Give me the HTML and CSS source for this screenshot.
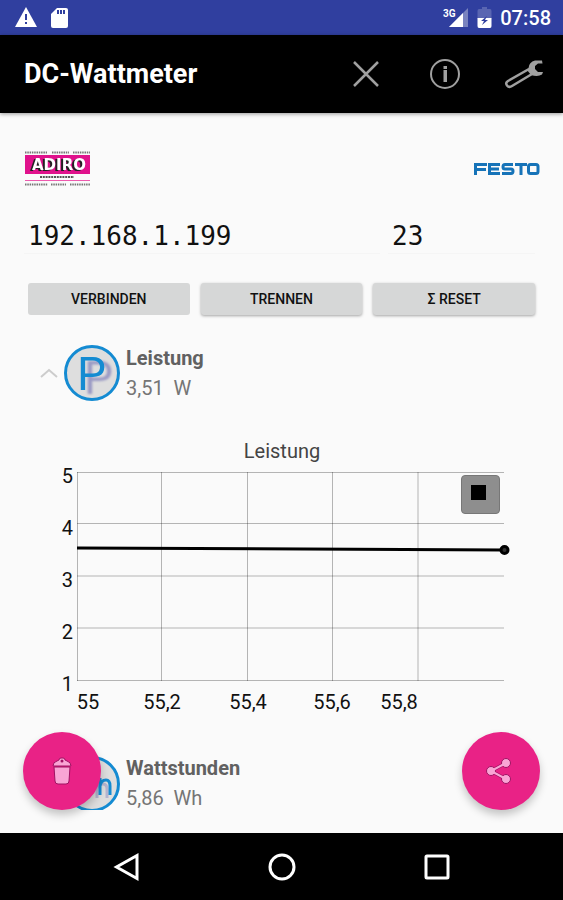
FILE: index.html
```html
<!DOCTYPE html>
<html lang="de">
<head>
<meta charset="utf-8">
<meta name="viewport" content="width=device-width, initial-scale=1">
<title>DC-Wattmeter</title>
<link rel="stylesheet" href="styles.css">
</head>
<body>
<div class="status-bar">
  <div class="status-group status-left">
    <svg width="22" height="21" viewBox="0 0 22 21" aria-hidden="true">
      <path d="M11 0 L22 20 H0 Z" fill="#fff"/>
      <path d="M10 7h2v6h-2zM10 15h2v2h-2z" fill="#303f9f"/>
    </svg>
    <svg width="17" height="20" viewBox="0 0 17 20" aria-hidden="true">
      <path d="M6 0H15Q17 0 17 2V18Q17 20 15 20H2Q0 20 0 18V6Z" fill="#fff"/>
      <path d="M6 2h2v4h-2zM9 2h2v4h-2zM12 2h2v4h-2z" fill="#303f9f"/>
    </svg>
  </div>
  <div class="status-group status-right">
    <svg width="26" height="21" viewBox="0 0 26 21" aria-hidden="true">
      <path d="M25 1V20H6Z" fill="#7983bf"/>
      <path d="M20 6V20H6Z" fill="#fff"/>
      <text class="network" x="0" y="10">3G</text>
    </svg>
    <svg width="15" height="21" viewBox="0 0 15 21" aria-hidden="true">
      <path d="M5 0H10V2H13Q14.500 2 14.500 4V12H.5V4Q.5 2 2 2H5Z" fill="#5965b2"/>
      <path d="M.5 11H14.500V19Q14.500 21 13 21H2Q.5 21 .5 19Z" fill="#fff"/>
      <path d="M10 9 4 14H7L5 18 11 13H8Z" fill="#303f9f"/>
    </svg>
    <time class="clock">07:58</time>
  </div>
</div>

<header class="app-bar">
  <h1 class="app-title">DC-Wattmeter</h1>
  <div class="actions">
    <button class="action" type="button" aria-label="Schließen">
      <svg width="40" height="40" viewBox="0 0 40 40"><path d="M8 8 32 32M32 8 8 32" stroke="#a0a0a0" stroke-width="2.500" fill="none"/></svg>
    </button>
    <button class="action" type="button" aria-label="Info">
      <svg width="40" height="40" viewBox="0 0 40 40"><circle cx="20" cy="20" r="14" stroke="#a0a0a0" stroke-width="2" fill="none"/><path d="M18.500 16h3.500v12h-3.500zM18.500 12h3.500v3h-3.500z" fill="#a0a0a0"/></svg>
    </button>
    <button class="action" type="button" aria-label="Einstellungen">
      <svg width="40" height="40" viewBox="0 0 40 40"><path d="M25 15 4 27Q1 29 3 31.500Q5 34 8 32L28 20" stroke="#a0a0a0" stroke-width="2.500" fill="none"/><path d="M38 6.500H31Q25 8 24.500 14L23 16 27 21Q34 23 38 20.500L39 18H34L31 15V12L34 9.500H38.500Z" fill="#a0a0a0"/></svg>
    </button>
  </div>
</header>

<main class="main">
  <div class="logos">
    <svg width="67" height="36" viewBox="0 0 67 36" role="img" aria-label="ADIRO">
      <path d="M1 1.500H23M28 1.500H45M49 1.500H66" stroke="#777" stroke-width="2" stroke-dasharray="1.500 .8"/>
      <rect x="1" y="4" width="65" height="19" fill="#e0128c"/>
      <text class="adiro" x="35" y="19">ADIRO</text>
      <path d="M16 26H50" stroke="#555" stroke-width="2" stroke-dasharray="2 .8"/>
      <path d="M1 29.500H66" stroke="#ee5aae"/>
      <path d="M1 33.500H24M27 33.500H42M46 33.500H66" stroke="#777" stroke-width="2" stroke-dasharray="1.500 .8"/>
    </svg>
    <svg class="festo" width="66" height="14" viewBox="-1 0 66 14" role="img" aria-label="FESTO">
      <g fill="none" stroke="#1673b8" stroke-width="3">
        <path d="M1.500 13V2.500H13M2 7.500H12"/>
        <path d="M26 2.500H15.500V11.500H26M15 7H25"/>
        <path d="M39 2.500H31Q29 2.500 29 5Q29 7 31 7H37Q39 7 39 9Q39 11.500 37 11.500H28"/>
        <path d="M41 2.500H53M47 2V13"/>
        <path d="M56.500 2.500H62Q64 2.500 64 4.500V9.500Q64 11.500 62 11.500H56.500Q54.500 11.500 54.500 9.500V4.500Q54.500 2.500 56.500 2.500Z"/>
      </g>
    </svg>
  </div>

  <form class="connection">
    <div class="fields">
      <input class="field" type="text" value="192.168.1.199" aria-label="IP-Adresse">
      <input class="field" type="text" value="23" aria-label="Port">
    </div>
    <div class="buttons">
      <button class="btn btn-flat" type="button">VERBINDEN</button>
      <button class="btn" type="button">TRENNEN</button>
      <button class="btn" type="button">Σ RESET</button>
    </div>
  </form>

  <section class="measure">
    <button class="chevron" type="button" aria-label="Einklappen" aria-expanded="true">
      <svg width="18" height="10" viewBox="0 0 18 10"><path d="M1 9 9 2 17 9" stroke="#ccc" stroke-width="2" fill="none"/></svg>
    </button>
    <svg width="56" height="56" viewBox="0 0 56 56" aria-hidden="true">
      <circle cx="28" cy="28" r="26.500" fill="#dedede" stroke="#148bd2" stroke-width="3"/>
      <text class="letter" x="13" y="45">P</text>
    </svg>
    <div class="reading">
      <h2 class="name">Leistung</h2>
      <p class="value">3,51&nbsp; W</p>
    </div>
  </section>

  <figure class="chart">
    <svg class="plot" viewBox="0 0 515 300" role="img" aria-label="Leistung">
      <g stroke="#000" stroke-opacity=".28" fill="none">
        <path d="M53 40.500H480M53 91.500H480M53 144H480M53 196H480M53 248.500H480"/>
        <path d="M53.500 40V249M137.500 40V249M223.500 40V249M308.500 40V249M394 40V249"/>
      </g>
      <path d="M53 116 480 118" stroke="#000" stroke-width="3"/>
      <circle cx="480.500" cy="118" r="3.500" fill="#333" stroke="#000" stroke-width="3"/>
      <text class="label label-title" x="258" y="26">Leistung</text>
      <g class="label label-y">
        <text x="49" y="51">5</text>
        <text x="49" y="103">4</text>
        <text x="49" y="155">3</text>
        <text x="49" y="207">2</text>
        <text x="49" y="259">1</text>
      </g>
      <g class="label">
        <text x="64" y="277">55</text>
        <text x="138" y="277">55,2</text>
        <text x="224" y="277">55,4</text>
        <text x="308" y="277">55,6</text>
        <text x="375" y="277">55,8</text>
      </g>
    </svg>
    <button class="stop" type="button" aria-label="Stopp">
      <svg width="37" height="37" viewBox="0 0 37 37"><path d="M9 9H24V24H9Z"/></svg>
    </button>
  </figure>

  <section class="measure measure-cut">
    <button class="chevron" type="button" aria-label="Ausklappen" aria-expanded="false">
      <svg width="18" height="10" viewBox="0 0 18 10"><path d="M1 1 9 8 17 1" stroke="#ccc" stroke-width="2" fill="none"/></svg>
    </button>
    <svg width="56" height="56" viewBox="0 0 56 56" aria-hidden="true">
      <circle cx="28" cy="28" r="26.500" fill="#dedede" stroke="#148bd2" stroke-width="3"/>
      <path d="M33 42V26M33 33Q34 28 39 28Q43 28 43 33V42" fill="none" stroke="#b4b4cf" stroke-width="3"/>
      <path d="M36 39V22M36 30Q37 24 42 24Q46 24 46 30V39" fill="none" stroke="#148bd2" stroke-width="3"/>
    </svg>
    <div class="reading">
      <h2 class="name">Wattstunden</h2>
      <p class="value">5,86&nbsp; Wh</p>
    </div>
  </section>

  <button class="fab fab-left" type="button" aria-label="Löschen">
    <svg width="30" height="32" viewBox="0 0 30 32"><g fill="#f9a5d5" stroke="#a01263"><path d="M7 12H23L22 26Q22 29 19 29H11Q8 29 8 26Z"/><path d="M6 11Q6 7 10 6L12 5Q12 3 14 3H16Q18 3 18 5L20 6Q24 7 24 11Z"/></g><circle cx="15" cy="6" r="1.500" fill="#a01263"/></svg>
  </button>
  <button class="fab fab-right" type="button" aria-label="Teilen">
    <svg width="30" height="32" viewBox="0 0 30 32"><path d="M20 8 5 16 20 24" fill="none" stroke="#a01263" stroke-width="3.500"/><g fill="#f9a5d5" stroke="#a01263"><circle cx="20" cy="8" r="4.500"/><circle cx="5" cy="16" r="4.500"/><circle cx="20" cy="24" r="4.500"/></g><path d="M20 8 5 16 20 24" fill="none" stroke="#f9a5d5" stroke-width="2"/></svg>
  </button>
</main>

<nav class="nav-bar" aria-label="System">
  <button class="nav-btn" type="button" aria-label="Zurück">
    <svg width="30" height="30" viewBox="0 0 30 30"><path d="M25 3.500V26.500L4.500 15Z"/></svg>
  </button>
  <button class="nav-btn" type="button" aria-label="Startseite">
    <svg width="30" height="30" viewBox="0 0 30 30"><circle cx="15" cy="15" r="12"/></svg>
  </button>
  <button class="nav-btn" type="button" aria-label="Übersicht">
    <svg width="30" height="30" viewBox="0 0 30 30"><rect x="4" y="4" width="22" height="22" rx="1"/></svg>
  </button>
</nav>
</body>
</html>
```
FILE: styles.css
```css
* {
  box-sizing: border-box;
}

body {
  margin: 0;
  min-height: 100vh;
  display: flex;
  flex-direction: column;
  background: #fafafa;
  font-family: Roboto, "Liberation Sans", sans-serif;
}

svg {
  display: block;
  flex: none;
}

button {
  padding: 0;
  border: 0;
  background: none;
  font-family: inherit;
}

.status-bar {
  display: flex;
  justify-content: space-between;
  align-items: center;
  height: 35px;
  padding: 0 12px 0 15px;
  background: #303f9f;
  color: #fff;
}

.status-group {
  display: flex;
  align-items: center;
}

.status-left {
  gap: 14px;
}

.status-right {
  gap: 8px;
}

.network {
  fill: #fff;
  font-size: 10px;
  font-weight: 700;
}

.clock {
  font-size: 20px;
  font-weight: 500;
}

.app-bar {
  position: relative;
  display: flex;
  justify-content: space-between;
  align-items: center;
  height: 78px;
  padding: 0 19px 0 24px;
  background: #000;
  box-shadow: 0 1px 4px rgba(0, 0, 0, 0.4);
}

.app-title {
  margin: 0;
  color: #fff;
  font-size: 27px;
  font-weight: 700;
}

.actions {
  display: flex;
  gap: 39px;
}

.main {
  position: relative;
  flex: 1;
  padding: 36px 24px 22px;
}

.logos {
  display: flex;
  justify-content: space-between;
  align-items: center;
  height: 40px;
}

.adiro {
  fill: #fff;
  font-family: "DejaVu Sans", sans-serif;
  font-size: 15px;
  font-weight: 700;
  text-anchor: middle;
  filter: drop-shadow(-2px 1px 0 #222);
}

.festo {
  overflow: visible;
}

.connection {
  margin-top: 29px;
}

.fields {
  display: grid;
  grid-template-columns: 356px 1fr;
  gap: 8px;
  padding-right: 4px;
}

.field {
  width: 100%;
  min-width: 0;
  height: 36px;
  padding: 0 4px;
  border: 0;
  border-bottom: 1px solid #f5f5f5;
  background: none;
  color: #111;
  font-family: "DejaVu Sans Mono", monospace;
  font-size: 26px;
}

.buttons {
  display: grid;
  grid-template-columns: repeat(3, 1fr);
  gap: 11px;
  margin-top: 29px;
  padding: 0 4px;
}

.btn {
  height: 32px;
  border-radius: 3px;
  background: #d6d7d7;
  color: #111;
  font-size: 14px;
  font-weight: 500;
  box-shadow: 0 1px 3px rgba(0, 0, 0, 0.35);
}

.btn-flat {
  box-shadow: none;
}

.measure {
  display: flex;
  align-items: center;
  height: 56px;
  margin-top: 30px;
  padding-left: 16px;
}

.measure-cut {
  height: 54px;
  align-items: flex-start;
  overflow: hidden;
}

.chevron {
  align-self: center;
  margin-right: 6px;
}

.reading {
  align-self: center;
  margin-left: 6px;
}

.name,
.value {
  margin: 0;
  font-size: 20px;
  line-height: 30px;
}

.name {
  color: #616161;
  font-weight: 700;
}

.value {
  color: #757575;
  font-weight: 400;
}

.letter {
  fill: #148bd2;
  font-size: 46px;
  filter: drop-shadow(7px 4px 1px #9a9ac4);
}

.chart {
  position: relative;
  margin: 31px 0 0;
}

.chart + .measure {
  margin-top: 24px;
}

.plot {
  width: 100%;
}

.label {
  fill: #111;
  font-size: 20px;
  text-anchor: middle;
}

.label-title {
  fill: #444;
}

.label-y {
  text-anchor: end;
}

.stop {
  position: absolute;
  top: 43px;
  right: 39px;
  border: 1px solid #777;
  border-radius: 4px;
  background: #8e8e8e;
}

.fab {
  position: absolute;
  bottom: 23px;
  display: grid;
  place-items: center;
  width: 78px;
  height: 78px;
  border-radius: 50%;
  background: #e92286;
  box-shadow: 0 5px 9px rgba(0, 0, 0, 0.22);
}

.fab-left {
  left: 23px;
}

.fab-right {
  right: 23px;
}

.nav-bar {
  display: flex;
  justify-content: center;
  align-items: center;
  gap: 125px;
  height: 67px;
  background: #000;
}

.nav-btn svg {
  fill: none;
  stroke: #fff;
  stroke-width: 3;
}
```
